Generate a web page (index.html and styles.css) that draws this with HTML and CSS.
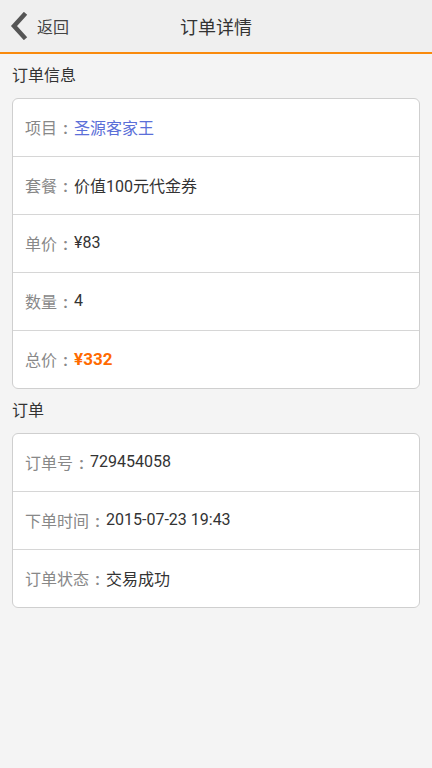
FILE: index.html
```html
<!DOCTYPE html>
<html lang="zh-CN">
<head>
  <meta charset="UTF-8" />
  <meta name="viewport" content="width=device-width, initial-scale=1.0"/>
  <title>订单详情</title>
  <link rel="stylesheet" href="styles.css">
</head>
<body>
  <div class="topbar">
    <a class="back" href="#">
      <svg class="back-icon" width="20" height="28" viewBox="0 0 20 28">
        <path d="M15 3 L5 14 L15 25" fill="none" stroke="#555" stroke-width="4.5" stroke-linecap="square"/>
      </svg>
      <span>返回</span>
    </a>
    <h1 class="title">订单详情</h1>
  </div>

  <!-- 订单信息 -->
  <div class="section-title">订单信息</div>
  <div class="card">
    <div class="row"><span class="label">项目<span class="colon">:</span></span><span class="value link">圣源客家王</span></div>
    <div class="row"><span class="label">套餐<span class="colon">:</span></span><span class="value">价值100元代金券</span></div>
    <div class="row"><span class="label">单价<span class="colon">:</span></span><span class="value">¥83</span></div>
    <div class="row"><span class="label">数量<span class="colon">:</span></span><span class="value">4</span></div>
    <div class="row"><span class="label">总价<span class="colon">:</span></span><span class="value price">¥332</span></div>
  </div>

  <!-- 订单 -->
  <div class="section-title">订单</div>
  <div class="card">
    <div class="row"><span class="label">订单号<span class="colon">:</span></span><span class="value">729454058</span></div>
    <div class="row"><span class="label">下单时间<span class="colon">:</span></span><span class="value">2015-07-23 19:43</span></div>
    <div class="row"><span class="label">订单状态<span class="colon">:</span></span><span class="value">交易成功</span></div>
  </div>
</body>
</html>
```

FILE: styles.css
```css
/* Page */
body {
  margin: 0;
  background-color: #f4f4f4;
  font-family: Roboto, "Noto Sans CJK SC", sans-serif;
  color: #333;
}

/* Top bar */
.topbar {
  position: relative;
  height: 52px;
  display: flex;
  align-items: center;
  justify-content: center;
  background-color: #efefef;
  border-bottom: 2px solid #f98a0c;
}

.back {
  position: absolute;
  left: 9px;
  top: 0;
  height: 52px;
  display: flex;
  align-items: center;
  gap: 8px;
  color: #444;
  font-size: 16px;
  text-decoration: none;
}

.back-icon {
  margin-top: -1px;
}

.title {
  margin: 0;
  font-size: 18px;
  font-weight: normal;
  color: #333;
}

/* Section heading */
.section-title {
  padding: 11px 12px 11px;
  line-height: 22px;
  font-size: 16px;
  color: #333;
}

/* Card */
.card {
  margin: 0 12px;
  background-color: #fff;
  border: 1px solid #cfcfcf;
  border-radius: 6px;
}

.row {
  height: 55px;
  display: flex;
  align-items: center;
  padding: 0 12px 2px;
  font-size: 16px;
}
.row + .row {
  border-top: 1px solid #d6d6d6;
}

.label {
  color: #888;
}

/* centred colon, as the device draws the full-width one */
.colon {
  display: inline-block;
  width: 17px;
  text-align: center;
  font-weight: bold;
}

.value {
  color: #333;
}

.link {
  color: #5b6fd8;
}

.price {
  color: #ff6a00;
  font-weight: bold;
  font-size: 17px;
}
```
